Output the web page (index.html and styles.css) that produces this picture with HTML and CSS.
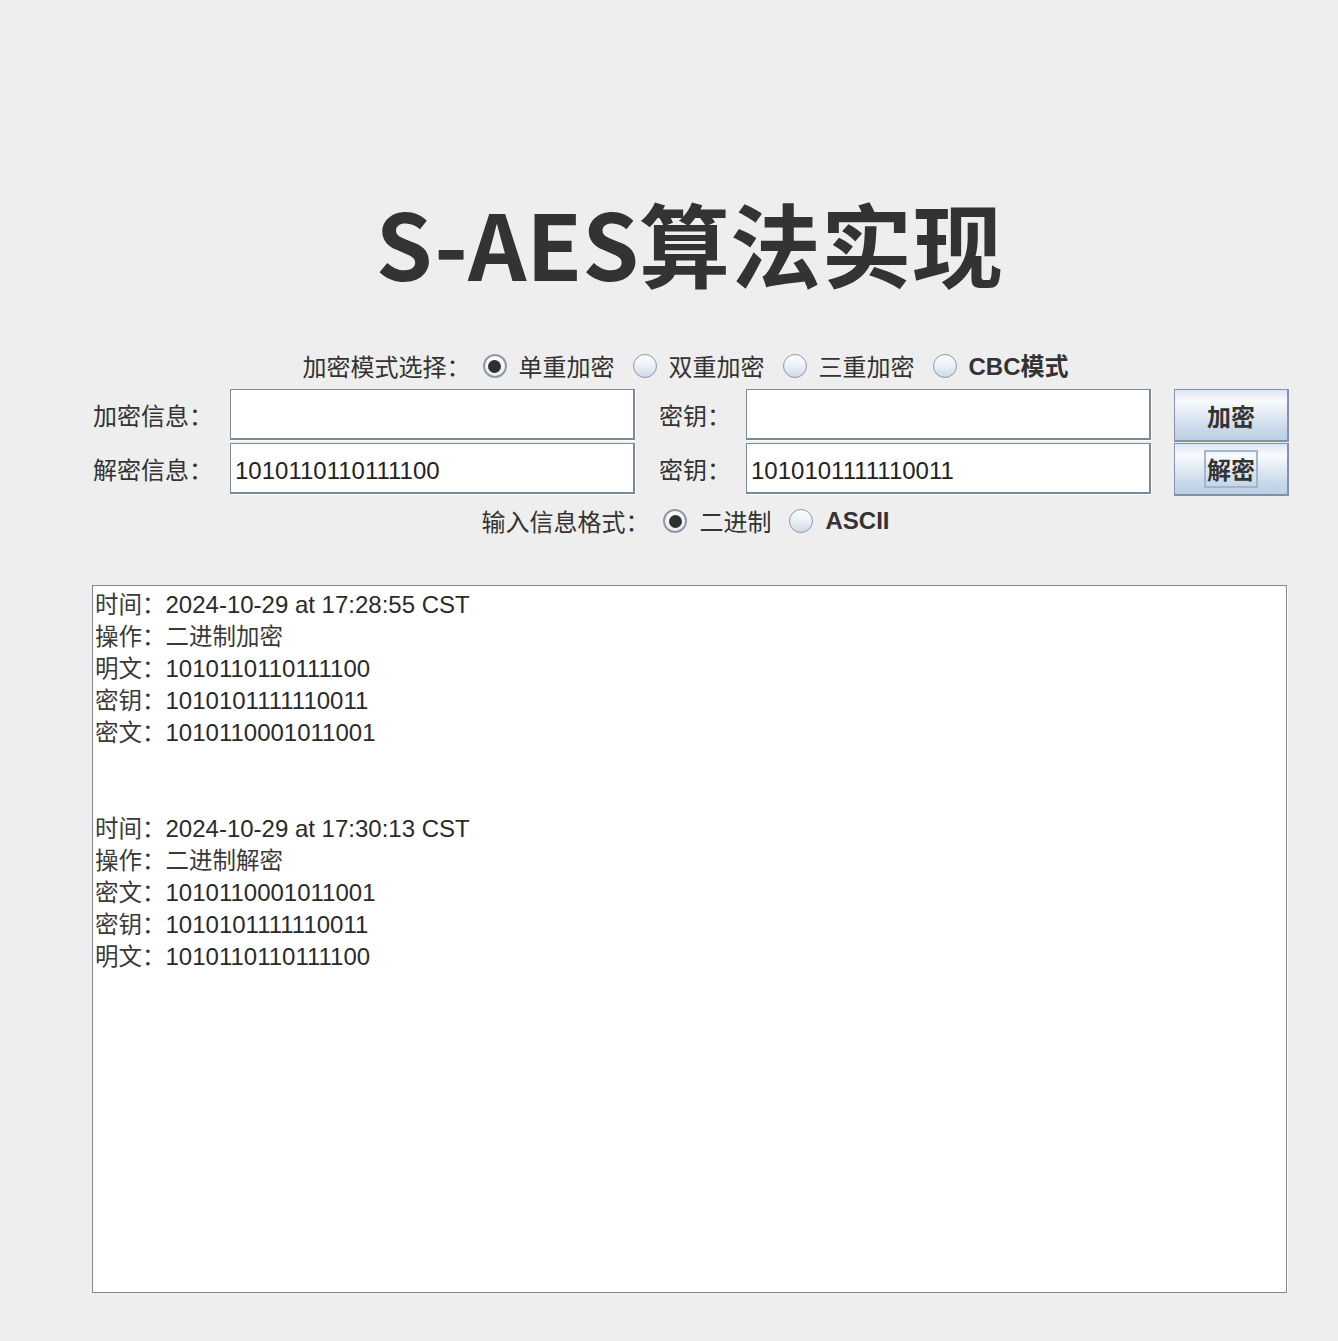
FILE: index.html
```html
<!DOCTYPE html>
<html lang="zh-CN">
<head>
<meta charset="utf-8">
<title>S-AES算法实现</title>
<link rel="stylesheet" href="styles.css">
</head>
<body>
<div class="frame">
  <h1 class="title">S-AES算法实现</h1>

  <div class="radio-row mode-row">
    <span class="label">加密模式选择：</span>
    <span class="opt"><span class="radio on"></span><span class="opt-text">单重加密</span></span>
    <span class="opt"><span class="radio"></span><span class="opt-text">双重加密</span></span>
    <span class="opt"><span class="radio"></span><span class="opt-text">三重加密</span></span>
    <span class="opt"><span class="radio"></span><span class="opt-text bold"><span class="latin">CBC</span>模式</span></span>
  </div>

  <div class="form-grid">
    <span class="label row-label">加密信息：</span>
    <div class="field"></div>
    <span class="label key-label">密钥：</span>
    <div class="field"></div>
    <button class="btn">加密</button>

    <span class="label row-label">解密信息：</span>
    <div class="field">1010110110111100</div>
    <span class="label key-label">密钥：</span>
    <div class="field">1010101111110011</div>
    <button class="btn"><span class="focus">解密</span></button>
  </div>

  <div class="radio-row format-row">
    <span class="label">输入信息格式：</span>
    <span class="opt"><span class="radio on"></span><span class="opt-text">二进制</span></span>
    <span class="opt"><span class="radio"></span><span class="opt-text bold latin">ASCII</span></span>
  </div>

  <div class="log">
    <div class="line"><span class="k">时间：</span>2024-10-29 at 17:28:55 CST</div>
    <div class="line"><span class="k">操作：</span><span class="k">二进制加密</span></div>
    <div class="line"><span class="k">明文：</span>1010110110111100</div>
    <div class="line"><span class="k">密钥：</span>1010101111110011</div>
    <div class="line"><span class="k">密文：</span>1010110001011001</div>
    <div class="line">&nbsp;</div>
    <div class="line">&nbsp;</div>
    <div class="line"><span class="k">时间：</span>2024-10-29 at 17:30:13 CST</div>
    <div class="line"><span class="k">操作：</span><span class="k">二进制解密</span></div>
    <div class="line"><span class="k">密文：</span>1010110001011001</div>
    <div class="line"><span class="k">密钥：</span>1010101111110011</div>
    <div class="line"><span class="k">明文：</span>1010110110111100</div>
  </div>
</div>
</body>
</html>
```

FILE: styles.css
```css
html, body {
  margin: 0;
  padding: 0;
  background: #eeeeee;
}

body {
  font-family: "Noto Sans CJK SC", "Liberation Sans", sans-serif;
  color: #333333;
}

.frame {
  margin-left: 92px;
  width: 1195px;
  padding-top: 186px;
}

.title {
  margin: 0;
  height: 114px;
  line-height: 110px;
  font-size: 91px;
  font-weight: 700;
  text-align: center;
  color: #333333;
  letter-spacing: 0;
}

.label {
  font-size: 24px;
  line-height: 32px;
  color: #333333;
  white-space: nowrap;
}

.radio-row {
  display: flex;
  justify-content: center;
  align-items: center;
  height: 32px;
  gap: 18px;
}

.radio-row .label {
  margin-right: -6px;
}

.mode-row {
  margin-top: 50px;
  padding-right: 8px;
}

.format-row {
  margin-top: 10px;
  padding-right: 8px;
}

.format-row .label {
  margin-right: -4px;
}

.opt {
  display: flex;
  align-items: center;
  gap: 12px;
}

.opt-text {
  font-size: 24px;
  line-height: 32px;
  color: #333333;
  white-space: nowrap;
}

.bold {
  font-weight: 700;
}

.latin {
  font-family: "Liberation Sans", "Noto Sans CJK SC", sans-serif;
}

.radio {
  width: 24px;
  height: 24px;
  box-sizing: border-box;
  border-radius: 50%;
  border: 1px solid #8b98a8;
  background: linear-gradient(#fbfcfe 0%, #eef2f7 45%, #cfd9e6 100%);
  display: flex;
  align-items: center;
  justify-content: center;
}

.radio.on {
  border: 2px solid #8e99a7;
  background: linear-gradient(#ffffff, #e9edf2);
}

.radio.on::after {
  content: "";
  width: 13px;
  height: 13px;
  border-radius: 50%;
  background: #2f2f2f;
}

.form-grid {
  margin-top: 7px;
  display: grid;
  grid-template-columns: 138px 405px 111px 405px 138px;
  grid-auto-rows: 52px;
  row-gap: 2px;
  align-items: start;
}

.row-label {
  align-self: center;
  padding-left: 1px;
}

.key-label {
  align-self: center;
  padding-left: 24px;
}

.field {
  height: 51px;
  box-sizing: border-box;
  background: #ffffff;
  border: 1px solid #7b8a9a;
  border-right-width: 2px;
  border-bottom-width: 2px;
  box-shadow: 1px 1px 0 #ffffff;
  padding-left: 4px;
  font-family: "Liberation Sans", sans-serif;
  font-size: 24px;
  line-height: 54px;
  color: #222222;
  overflow: visible;
}

.btn {
  justify-self: end;
  width: 115px;
  height: 53px;
  margin: 0;
  padding: 0;
  box-sizing: border-box;
  border: 1px solid #8294aa;
  border-bottom: 2px solid #7f91a7;
  border-right: 2px solid #8294aa;
  background: linear-gradient(#dce6f1 0%, #f9fbfe 22%, #e6edf6 45%, #cbdaeb 75%, #bccfe4 100%);
  font-family: "Noto Sans CJK SC", sans-serif;
  font-size: 24px;
  font-weight: 700;
  color: #333333;
  display: flex;
  align-items: center;
  justify-content: center;
}

.focus {
  border: 2px solid #a3b6cc;
  padding: 0 1px;
  line-height: 34px;
}

.log {
  margin-top: 48px;
  height: 708px;
  box-sizing: border-box;
  background: #ffffff;
  border: 1px solid #7b8a9a;
  box-shadow: 1px 1px 0 #ffffff;
  padding: 1px 2px;
  font-family: "Liberation Sans", "Noto Sans CJK SC", sans-serif;
  font-size: 24px;
  line-height: 32px;
  color: #2a2a2a;
}

.line {
  height: 32px;
  white-space: nowrap;
}

.k {
  font-family: "Noto Sans CJK SC", sans-serif;
  font-size: 23.5px;
  font-weight: 400;
  color: #3a3a3a;
}
```
